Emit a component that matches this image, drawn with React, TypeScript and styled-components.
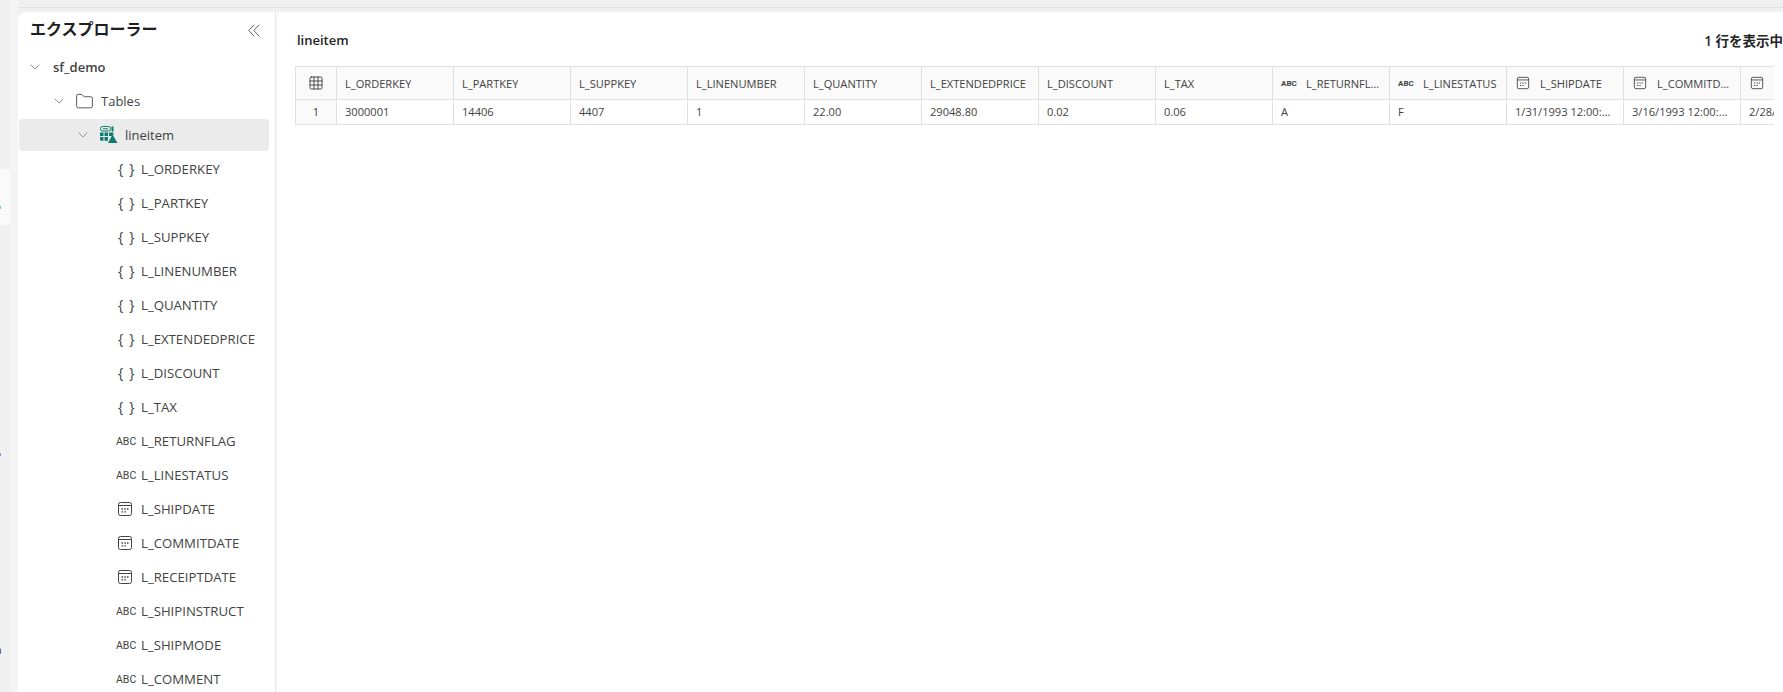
import React from "react";
import styled, { createGlobalStyle } from "styled-components";
import { ChevronDown, Folder, Grid3x3 } from "lucide-react";

const GlobalStyle = createGlobalStyle`
  html, body {
    margin: 0;
    padding: 0;
    height: 100%;
    overflow: hidden;
    background: #f0f0f0;
    font-family: "Open Sans", "Noto Sans CJK JP", sans-serif;
  }
`;

const Page = styled.div`
  display: flex;
  height: 692px;
  width: 1783px;
  overflow: hidden;
`;

const Rail = styled.div`
  width: 18px;
  flex: none;
  display: flex;
  flex-direction: column;
  overflow: hidden;
  background: linear-gradient(to right, #f0f0f0 0 10px, #f4f4f4 10px);
`;

const RailCard = styled.div`
  width: 10px;
  height: 56px;
  margin-top: 169px;
  background: #fafafa;
  border-radius: 0 4px 4px 0;
  position: relative;

  &::after {
    content: "";
    position: absolute;
    left: 0;
    top: 37px;
    width: 1px;
    height: 3px;
    background: #6cc4f0;
  }
`;

const RailTick = styled.div`
  width: 1px;
  height: 3px;
  margin-top: 228px;
  background: #7a9ce0;
`;

const RailGlyph = styled.span`
  margin: 188px 0 0 -4px;
  font-size: 10px;
  line-height: 12px;
  color: #3d3560;
`;

const Shell = styled.div`
  flex: 1;
  display: flex;
  flex-direction: column;
  min-width: 0;
`;

const TopStrip = styled.div`
  height: 7px;
  flex: none;
  background: #f0f0f0;
  border-bottom: 1px solid #e2e2e2;
  margin-bottom: 4px;
`;

const Body = styled.div`
  flex: 1;
  display: flex;
  min-height: 0;
  background: #fff;
  border-radius: 8px 0 0 0;
  overflow: hidden;
`;

const Sidebar = styled.aside`
  width: 258px;
  flex: none;
  border-right: 1px solid #e4e4e4;
  box-shadow: 1px 0 2px rgba(0, 0, 0, 0.04);
  padding: 0 6px 0 1px;
  box-sizing: border-box;
`;

const SidebarHead = styled.div`
  display: flex;
  align-items: center;
  justify-content: space-between;
  height: 32px;
  padding: 0 9px 0 11px;
  margin-bottom: 7px;
`;

const SidebarTitle = styled.h2`
  margin: 0;
  font-size: 16px;
  font-weight: 700;
  color: #1f1f1f;
`;

const CollapseButton = styled.span`
  display: flex;
  margin-top: 5px;
  color: #616161;
`;

const TreeRow = styled.div<{ $depth: number; $active?: boolean }>`
  display: flex;
  align-items: center;
  height: 32px;
  margin-bottom: 2px;
  padding-left: ${(p) => 8 + p.$depth * 24}px;
  border-radius: 4px;
  background: ${(p) => (p.$active ? "#ebebeb" : "transparent")};
  font-size: 13px;
  color: #424242;
  white-space: nowrap;
`;

const RootName = styled.span`
  font-weight: 600;
`;

const Caret = styled.span`
  width: 26px;
  display: flex;
  flex: none;
  color: #808080;
`;

const NodeIcon = styled.span`
  display: flex;
  flex: none;
  width: 26px;
  margin-left: -2px;
  color: #424242;
`;

const FieldRow = styled(TreeRow)`
  padding-left: 97px;
  font-size: 13.2px;
`;

const FieldIcon = styled.span`
  width: 25px;
  flex: none;
  display: flex;
  color: #424242;
`;

const Braces = styled.span`
  margin-left: 2px;
  font-size: 14px;
  line-height: 16px;
  letter-spacing: 6px;
`;

const DateWrap = styled.span`
  display: flex;
  margin-left: 1px;
`;

const AbcLabel = styled.span<{ $small?: boolean }>`
  font-family: "Roboto", sans-serif;
  font-size: ${(p) => (p.$small ? 8 : 10.5)}px;
  font-weight: ${(p) => (p.$small ? 700 : 400)};
  color: #424242;
`;

const Main = styled.main`
  flex: 1;
  min-width: 0;
  padding: 0 0 0 19px;
  overflow: hidden;
`;

const MainHead = styled.div`
  display: flex;
  justify-content: space-between;
  align-items: center;
  height: 47px;
  box-sizing: border-box;
  padding: 8px 0 0 2px;
  margin-bottom: 7px;
  font-size: 13px;
  font-weight: 600;
  color: #242424;
  white-space: nowrap;
`;

const RowCount = styled.span`
  font-size: 13.5px;
`;

const GridWrap = styled.div`
  width: 1479px;
  overflow: hidden;
`;

const Grid = styled.div`
  display: grid;
  grid-template-columns: 41px repeat(13, 117px);
  width: max-content;
  border-top: 1px solid #e0e0e0;
  border-left: 1px solid #e0e0e0;
  font-size: 11.1px;
  color: #424242;
`;

const Cell = styled.div<{ $head?: boolean; $index?: boolean }>`
  display: flex;
  align-items: center;
  justify-content: ${(p) => (p.$index ? "center" : "flex-start")};
  height: ${(p) => (p.$head ? 33 : 25)}px;
  padding: 0 ${(p) => (p.$index ? "0" : "8px")};
  padding-bottom: ${(p) => (p.$head ? 0 : 1)}px;
  box-sizing: border-box;
  background: ${(p) => (p.$head || p.$index ? "#fafafa" : "#fff")};
  border-right: 1px solid #e0e0e0;
  border-bottom: 1px solid #e0e0e0;
  min-width: 0;
  white-space: nowrap;
`;

const HeadIcon = styled.span<{ $inset?: boolean }>`
  display: flex;
  flex: none;
  width: 25px;
  box-sizing: border-box;
  padding-left: ${(p) => (p.$inset ? 1 : 0)}px;
`;

const CellText = styled.span`
  overflow: hidden;
  text-overflow: ellipsis;
`;

type Kind = "num" | "abc" | "date";

const fields: { name: string; kind: Kind }[] = [
  { name: "L_ORDERKEY", kind: "num" },
  { name: "L_PARTKEY", kind: "num" },
  { name: "L_SUPPKEY", kind: "num" },
  { name: "L_LINENUMBER", kind: "num" },
  { name: "L_QUANTITY", kind: "num" },
  { name: "L_EXTENDEDPRICE", kind: "num" },
  { name: "L_DISCOUNT", kind: "num" },
  { name: "L_TAX", kind: "num" },
  { name: "L_RETURNFLAG", kind: "abc" },
  { name: "L_LINESTATUS", kind: "abc" },
  { name: "L_SHIPDATE", kind: "date" },
  { name: "L_COMMITDATE", kind: "date" },
  { name: "L_RECEIPTDATE", kind: "date" },
  { name: "L_SHIPINSTRUCT", kind: "abc" },
  { name: "L_SHIPMODE", kind: "abc" },
  { name: "L_COMMENT", kind: "abc" },
];

const values = [
  "3000001", "14406", "4407", "1", "22.00", "29048.80", "0.02", "0.06", "A", "F",
  "1/31/1993 12:00:00 AM", "3/16/1993 12:00:00 AM", "2/28/1993 12:00:00 AM",
];

const DateIcon: React.FC<{ size?: number }> = ({ size = 16 }) => (
  <svg width={size} height={size} viewBox="0 0 16 16" fill="none" stroke="currentColor">
    <rect x="1.5" y="1.5" width="13" height="13" rx="2" />
    <path d="M1.5 4.5h13" />
    <path d="M4.5 8h1.5M7.3 8h1.5M10 8h1.5M4.5 10.8h1.5M7.3 10.8h1.5" strokeWidth="1.3" />
  </svg>
);

const CollapseIcon: React.FC = () => (
  <svg width="12" height="13" viewBox="0 0 12 13" fill="none" stroke="currentColor" strokeWidth="1">
    <path d="M6.2 0.7L0.8 6.5l5.4 5.8" />
    <path d="M11.2 0.7L5.8 6.5l5.4 5.8" />
  </svg>
);

const DeltaTableIcon: React.FC = () => (
  <svg width="19" height="18" viewBox="0 0 19 18">
    <rect x="1.5" y="0.5" width="10" height="4.5" rx="2" fill="none" stroke="#0f7b6c" />
    <path d="M4 2.8h5" stroke="#0f7b6c" />
    <path d="M12.5 0.5h2v5h-2z" fill="#0f7b6c" />
    <path d="M1 6.5h3.5v3.5H1zM5.5 6.5h3.5v3.5H5.5zM10 6.5h4.5v1.8L12.8 10H10zM1 11h3.5v3.7H2.3Q1 14.7 1 13.4zM5.5 11h3.5v3.7H5.5z" fill="#0f7b6c" />
    <path d="M13.5 8.5L18.5 17H9z" fill="#0f7b6c" />
  </svg>
);

const FieldKindIcon: React.FC<{ kind: Kind }> = ({ kind }) => {
  if (kind === "abc") return <AbcLabel>ABC</AbcLabel>;
  if (kind === "date") return <DateWrap><DateIcon /></DateWrap>;
  return <Braces>{"{}"}</Braces>;
};

const App: React.FC = () => {
  return (
    <Page>
      <GlobalStyle />
      <Rail>
        <RailCard />
        <RailTick />
        <RailGlyph>a</RailGlyph>
      </Rail>
      <Shell>
        <TopStrip />
        <Body>
          <Sidebar>
            <SidebarHead>
              <SidebarTitle>エクスプローラー</SidebarTitle>
              <CollapseButton>
                <CollapseIcon />
              </CollapseButton>
            </SidebarHead>
            <TreeRow $depth={0}>
              <Caret><ChevronDown size={16} strokeWidth={1.3} /></Caret>
              <RootName>sf_demo</RootName>
            </TreeRow>
            <TreeRow $depth={1}>
              <Caret><ChevronDown size={16} strokeWidth={1.3} /></Caret>
              <NodeIcon><Folder size={19} strokeWidth={1.1} /></NodeIcon>
              Tables
            </TreeRow>
            <TreeRow $depth={2} $active>
              <Caret><ChevronDown size={16} strokeWidth={1.3} /></Caret>
              <NodeIcon><DeltaTableIcon /></NodeIcon>
              lineitem
            </TreeRow>
            {fields.map((f) => (
              <FieldRow key={f.name} $depth={3}>
                <FieldIcon><FieldKindIcon kind={f.kind} /></FieldIcon>
                {f.name}
              </FieldRow>
            ))}
          </Sidebar>
          <Main>
            <MainHead>
              <span>lineitem</span>
              <RowCount>1 行を表示中</RowCount>
            </MainHead>
            <GridWrap>
              <Grid>
                <Cell $head $index><Grid3x3 size={16} strokeWidth={1.3} color="#333" /></Cell>
                {fields.slice(0, 13).map((f) => (
                  <Cell $head key={f.name}>
                    {f.kind === "abc" && <HeadIcon><AbcLabel $small>ABC</AbcLabel></HeadIcon>}
                    {f.kind === "date" && <HeadIcon $inset><DateIcon size={14} /></HeadIcon>}
                    <CellText>{f.name}</CellText>
                  </Cell>
                ))}
                <Cell $index>1</Cell>
                {values.map((v, i) => (
                  <Cell key={i}><CellText>{v}</CellText></Cell>
                ))}
              </Grid>
            </GridWrap>
          </Main>
        </Body>
      </Shell>
    </Page>
  );
};

export default App;
